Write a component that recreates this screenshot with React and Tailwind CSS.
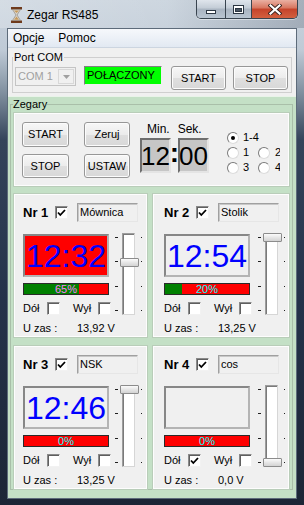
import React from "react";

const Check = ({ on }) => (
  <div className="w-[13px] h-[13px] shrink-0 bg-white border border-t-[#8a8a8a] border-l-[#8a8a8a] border-b-[#f2f2f2] border-r-[#f2f2f2] shadow-[inset_1px_1px_0_#5f5f5f] flex items-center justify-center">
    {on && (
      <svg width="9" height="8" viewBox="0 0 9 8">
        <path d="M1 3.5 L3.3 6 L8 1" stroke="#000" strokeWidth="1.8" fill="none" />
      </svg>
    )}
  </div>
);

const Radio = ({ on }) => (
  <div className="w-[12px] h-[12px] shrink-0 rounded-full bg-white border border-t-[#7a7a7a] border-l-[#7a7a7a] border-b-[#dcdcdc] border-r-[#dcdcdc] flex items-center justify-center">
    {on && <div className="w-[4px] h-[4px] rounded-full bg-black" />}
  </div>
);

const Btn = ({ children, w, h }) => (
  <div
    className={`${w} ${h} shrink-0 flex items-center justify-center rounded-[3px] border border-[#979797] bg-[linear-gradient(to_bottom,#f7f7f7,#ececec_50%,#dfdfdf_51%,#d8d8d8)] shadow-[inset_0_0_0_1px_#fcfcfc] text-[11px] text-black`}
  >
    {children}
  </div>
);

const Slider = ({ thumb }) => (
  <div className="flex h-[82px] shrink-0">
    <div className="flex flex-col justify-between py-[4px] w-[3px]">
      {[0, 1, 2, 3].map((i) => (
        <div key={i} className="h-[1px] w-[3px] bg-[#202020]" />
      ))}
    </div>
    <div className="relative ml-[4px] w-[13px] h-full bg-white border border-t-[#9d9d9d] border-l-[#9d9d9d] border-b-[#d6d6d6] border-r-[#d6d6d6] shadow-[inset_1px_1px_0_#7a7a7a]">
      <div
        className={`absolute left-[-3px] w-[19px] h-[9px] rounded-[1px] border border-[#8c8c8c] bg-[linear-gradient(to_bottom,#fbfbfb,#e6e6e6_50%,#d3d3d3)] ${thumb}`}
      />
    </div>
    <div className="flex flex-col justify-between py-[4px] ml-[6px]">
      {[0, 1, 2, 3].map((i) => (
        <div key={i} className="h-[1px] w-[1px] bg-[#202020]" />
      ))}
    </div>
  </div>
);

const ClockPanel = ({ nr, name, time, red, pct, txt, dol, thumb, wide, volt }) => (
  <div
    className={`${wide ? "w-[136px] pl-[10px]" : "w-[133px] pl-[8px]"} h-[143px] shrink-0 bg-[#f0f0f0] border border-[#fdfdfd] shadow-[0_0_0_1px_#b9cdb9] pt-[8px] flex flex-col`}
  >
    <div className="flex items-center h-[19px]">
      <span className="w-[32px] text-[13px] font-bold leading-none whitespace-nowrap">Nr {nr}</span>
      <Check on />
      <div className="ml-[9px] w-[61px] h-[19px] bg-[#f0f0f0] border border-t-[#a0a0a0] border-l-[#a0a0a0] border-b-[#e6e6e6] border-r-[#e6e6e6] shadow-[inset_1px_1px_0_#c8c8c8] pl-[2px] flex items-center text-[11px]">
        {name}
      </div>
    </div>
    <div className="flex mt-[11px]">
      <div className="w-[86px] shrink-0 flex flex-col">
        <div
          className={`mt-[1px] h-[43px] border-2 border-t-[#878787] border-l-[#878787] border-b-[#b4b4b4] border-r-[#b4b4b4] flex items-center justify-center text-[32px] leading-none text-[#0000ff] ${
            red ? "bg-[#ff0000]" : "bg-[#f0f0f0]"
          }`}
        >
          {time}
        </div>
        <div className="relative mt-[6px] h-[12px] border border-[#2a2a2a] bg-[#ff0000] flex">
          <div className="h-full bg-[#008000]" style={{ width: `${pct}%` }} />
          <div className={`absolute inset-0 flex items-center justify-center text-[11px] leading-none ${txt}`}>
            {pct}%
          </div>
        </div>
        <div className="mt-[7px] h-[13px] flex items-center text-[11px] whitespace-nowrap">
          <span className="w-[24px] shrink-0">Dół</span>
          <Check on={dol} />
          <span className="ml-[13px] w-[25px] shrink-0">Wył</span>
          <Check />
        </div>
        <div className="mt-[6px] h-[14px] flex items-center text-[11px] whitespace-nowrap">
          <span className="w-[54px] shrink-0">U zas :</span>
          <span className="shrink-0">{volt}</span>
        </div>
      </div>
      <div className={wide ? "ml-[8px]" : "ml-[6px]"}>
        <Slider thumb={thumb} />
      </div>
    </div>
  </div>
);

const Hourglass = () => (
  <svg width="11" height="16" viewBox="0 0 11 16">
    <rect x="0" y="0" width="11" height="2.5" fill="#6e3a1c" />
    <rect x="0" y="13.5" width="11" height="2.5" fill="#6e3a1c" />
    <path d="M1.5 2.5 H9.5 L6 8 L9.5 13.5 H1.5 L5 8 Z" fill="#d8d4cc" stroke="#8a7a6a" strokeWidth="0.6" />
    <path d="M3 12.8 L5.5 9.5 L8 12.8 Z" fill="#c89a5a" />
    <path d="M3 3.5 H8 L5.5 6 Z" fill="#c89a5a" />
  </svg>
);

export default function App() {
  return (
    <div className="w-[304px] h-[505px] flex flex-col overflow-hidden font-['Liberation_Sans',Arial,sans-serif] text-black bg-[linear-gradient(to_bottom,#c9d3dd_0px,#bfcad6_50px,#7d8c9c_95px,#34445a_140px,#24324a_300px,#1c2636_505px)]">
      {/* title bar */}
      <div className="h-[28px] shrink-0 flex items-start bg-[linear-gradient(to_right,rgba(255,255,255,0.22),rgba(255,255,255,0.08)_55%,rgba(60,70,85,0.25))]">
        <div className="ml-[11px] mt-[7px]">
          <Hourglass />
        </div>
        <div className="ml-[5px] mt-[8px] text-[12px] leading-[14px]">Zegar RS485</div>
        <div className="ml-auto mr-[6px] flex h-[19px] rounded-b-[5px] border border-t-0 border-[#39444f] overflow-hidden shadow-[0_1px_0_rgba(255,255,255,0.45)]">
          <div className="w-[29px] border-r border-[#39444f] bg-[linear-gradient(to_bottom,#dfe5ec,#c3ccd6_45%,#a9b4c1_50%,#b9c5d1)] flex items-center justify-center">
            <div className="w-[10px] h-[4px] mt-[5px] bg-white border border-[#2c3642]" />
          </div>
          <div className="w-[26px] border-r border-[#39444f] bg-[linear-gradient(to_bottom,#dfe5ec,#c3ccd6_45%,#a9b4c1_50%,#b9c5d1)] flex items-center justify-center">
            <div className="w-[11px] h-[9px] border border-[#2c3642] bg-white p-[1px] pt-[2px]">
              <div className="w-full h-full bg-[#4a5562] border border-[#2c3642]" />
            </div>
          </div>
          <div className="w-[45px] bg-[linear-gradient(to_bottom,#eab0a2,#d7755e_45%,#c5432a_50%,#d3603f)] flex items-center justify-center">
            <svg width="14" height="11" viewBox="0 0 14 11">
              <path d="M2.5 1.5 L11.5 9.5 M11.5 1.5 L2.5 9.5" stroke="#3a2420" strokeWidth="4" strokeLinecap="square" />
              <path d="M2.5 1.5 L11.5 9.5 M11.5 1.5 L2.5 9.5" stroke="#fff" strokeWidth="2.2" strokeLinecap="square" />
            </svg>
          </div>
        </div>
      </div>

      {/* client */}
      <div className="mx-[7px] mb-[6px] flex-1 flex flex-col border border-[#5d6b7a] bg-[#f0f0f0]">
        <div className="h-[19px] shrink-0 border-b border-[#ccd5e0] bg-[linear-gradient(to_bottom,#f6f8fb,#e2e9f2)] flex items-center pl-[5px] gap-[14px] text-[12px]">
          <span>Opcje</span>
          <span>Pomoc</span>
        </div>

        <div className="h-[48px] shrink-0 pt-[2px]">
          <fieldset className="ml-[4px] mr-[4px] border border-[#cfcfcf] pl-[2px] pb-[2px] pt-[2px]">
            <legend className="text-[11px] leading-[14px] px-[1px] -ml-[2px]">Port COM</legend>
            <div className="flex items-start h-[24px]">
              <div className="mt-[1px] w-[61px] h-[19px] bg-[#f0f0f0] border border-[#c4c4c4] flex items-center">
                <span className="pl-[2px] text-[11px] text-[#a0a0a0] flex-1">COM 1</span>
                <div className="w-[16px] h-[15px] mr-[1px] bg-[#f0f0f0] border border-[#d8d8d8] flex items-center justify-center">
                  <svg width="7" height="4" viewBox="0 0 7 4">
                    <path d="M0 0 H7 L3.5 4 Z" fill="#a0a0a0" />
                  </svg>
                </div>
              </div>
              <div className="ml-[8px] w-[78px] h-[19px] bg-[#00ff00] border border-t-[#808080] border-l-[#808080] border-b-[#f0f0f0] border-r-[#f0f0f0] flex items-center pl-[2px] text-[11px]">
                POŁĄCZONY
              </div>
              <div className="ml-[9px]">
                <Btn w="w-[55px]" h="h-[24px]">START</Btn>
              </div>
              <div className="ml-[7px]">
                <Btn w="w-[55px]" h="h-[24px]">STOP</Btn>
              </div>
            </div>
          </fieldset>
        </div>

        <div className="flex-1 border-t border-[#e9f3e9] bg-[#c4e0c6] pt-[0px]">
          <fieldset className="ml-[2px] mr-[3px] border border-[#a9bfa9] pl-[3px] pr-[3px] pt-[2px]">
            <legend className="text-[11px] leading-[14px] -ml-[1px]">Zegary</legend>
            <div className="h-[73px] bg-[#f0f0f0] border border-[#fdfdfd] shadow-[0_0_0_1px_#b9cdb9] flex items-start pl-[7px]">
              <div className="flex flex-col gap-[7px] mt-[8px]">
                <Btn w="w-[47px]" h="h-[25px]">START</Btn>
                <Btn w="w-[47px]" h="h-[24px]">STOP</Btn>
              </div>
              <div className="flex flex-col gap-[7px] mt-[8px] ml-[15px]">
                <Btn w="w-[46px]" h="h-[25px]">Zeruj</Btn>
                <Btn w="w-[46px]" h="h-[24px]">USTAW</Btn>
              </div>
              <div className="ml-[10px] mt-[8px] flex flex-col">
                <div className="h-[14px] flex items-center text-[12px] pl-[7px]">
                  <span>Min.</span>
                  <span className="ml-[8px]">Sek.</span>
                </div>
                <div className="mt-[2px] flex h-[35px]">
                  <div className="w-[31px] h-[35px] bg-[#c6c6c6] border-2 border-t-[#6e6e6e] border-l-[#6e6e6e] border-b-[#e4e4e4] border-r-[#e4e4e4] flex items-center justify-center text-[26px] leading-none">
                    12
                  </div>
                  <div className="w-[7px] flex justify-center text-[28px] font-bold leading-[28px] pt-[1px]">:</div>
                  <div className="w-[31px] h-[35px] bg-[#c6c6c6] border-2 border-t-[#6e6e6e] border-l-[#6e6e6e] border-b-[#e4e4e4] border-r-[#e4e4e4] flex items-center justify-center text-[26px] leading-none">
                    00
                  </div>
                </div>
              </div>
              <div className="ml-[18px] mt-[16px] w-[53px] overflow-hidden text-[11px] whitespace-nowrap">
                <div className="h-[15px] flex items-center">
                  <Radio on />
                  <span className="ml-[4px]">1-4</span>
                </div>
                <div className="h-[15px] flex items-center">
                  <div className="w-[31px] shrink-0 flex items-center">
                    <Radio />
                    <span className="ml-[4px]">1</span>
                  </div>
                  <Radio />
                  <span className="ml-[5px]">2</span>
                </div>
                <div className="h-[15px] flex items-center">
                  <div className="w-[31px] shrink-0 flex items-center">
                    <Radio />
                    <span className="ml-[4px]">3</span>
                  </div>
                  <Radio />
                  <span className="ml-[5px]">4</span>
                </div>
              </div>
            </div>

            <div className="mt-[8px] flex gap-[6px]">
              <ClockPanel nr={1} name="Mównica" time="12:32" red pct={65} txt="text-[#ff7fff]" thumb="top-[24px]" volt="13,92 V" />
              <ClockPanel nr={2} name="Stolik" time="12:54" pct={20} txt="text-[#00ffff]" thumb="top-[-1px]" wide volt="13,25 V" />
            </div>
            <div className="mt-[9px] flex gap-[6px]">
              <ClockPanel nr={3} name="NSK" time="12:46" pct={0} txt="text-[#00ffff]" thumb="top-[-1px]" volt="13,25 V" />
              <ClockPanel nr={4} name="cos" time="" pct={0} txt="text-[#00ffff]" dol thumb="top-[72px]" wide volt="0,0 V" />
            </div>
          </fieldset>
        </div>
      </div>
    </div>
  );
}
